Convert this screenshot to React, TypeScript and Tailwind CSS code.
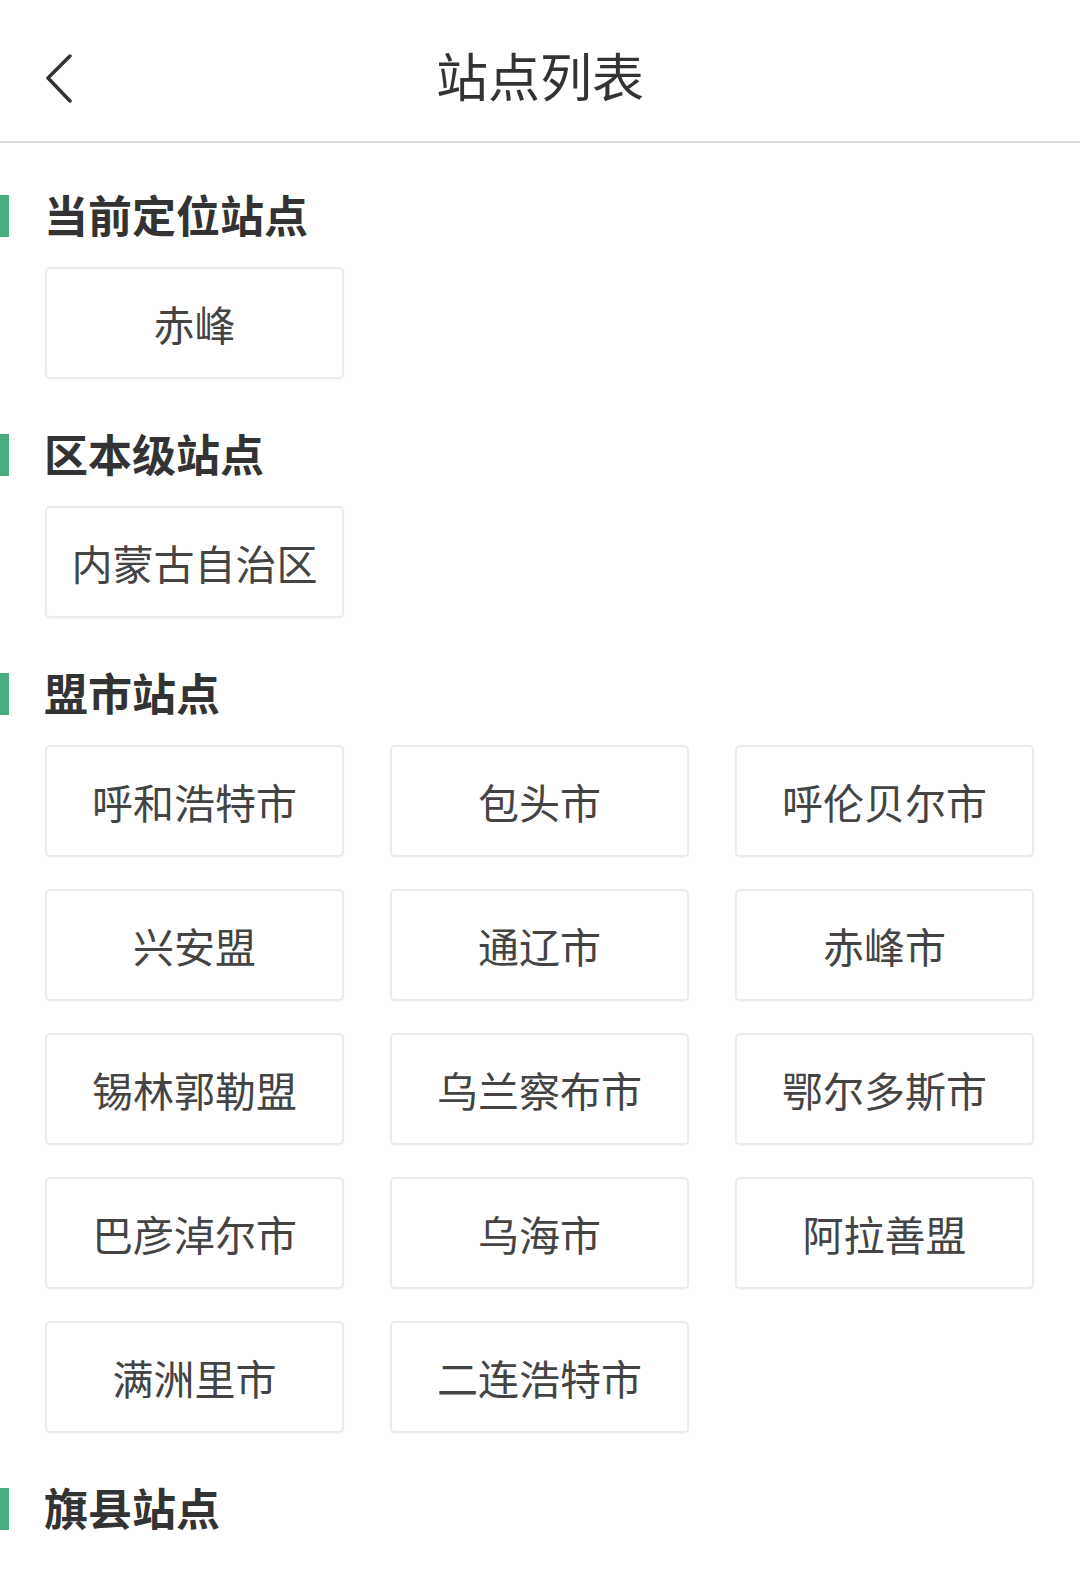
import React from 'react';

const font = { fontFamily: '"Noto Sans CJK SC", "Noto Sans", sans-serif' };

const sections: { title: string; items: string[] }[] = [
  { title: '当前定位站点', items: ['赤峰'] },
  { title: '区本级站点', items: ['内蒙古自治区'] },
  {
    title: '盟市站点',
    items: [
      '呼和浩特市', '包头市', '呼伦贝尔市',
      '兴安盟', '通辽市', '赤峰市',
      '锡林郭勒盟', '乌兰察布市', '鄂尔多斯市',
      '巴彦淖尔市', '乌海市', '阿拉善盟',
      '满洲里市', '二连浩特市',
    ],
  },
  { title: '旗县站点', items: [] },
];

function SectionTitle({ title }: { title: string }) {
  return (
    <div className="flex h-[60px] items-center">
      <div className="h-[42px] w-[9px] bg-[#48ad7e]" />
      <div className="mb-[4px] ml-[35px] text-[44px] font-bold leading-none text-[#333]">{title}</div>
    </div>
  );
}

function Chip({ label }: { label: string }) {
  return (
    <div className="flex h-[112px] items-center justify-center rounded-[5px] border-2 border-[#ececec] bg-white text-[41px] leading-none text-[#444] shadow-[0_1px_2px_rgba(0,0,0,0.04)]">
      {label}
    </div>
  );
}

export default function App() {
  return (
    <div className="min-h-[1571px] w-[1080px] overflow-hidden bg-white" style={font}>
      {/* Header */}
      <div className="relative flex h-[143px] items-center justify-center border-b-2 border-[#dedede]">
        <svg className="absolute left-[44px] top-[53px]" width="30" height="50" viewBox="0 0 30 50" fill="none">
          <polyline points="26,3 4,25 26,48" stroke="#333" strokeWidth="3.5" strokeLinecap="round" strokeLinejoin="round" />
        </svg>
        <div className="mt-[8px] text-[52px] leading-none text-[#333]">站点列表</div>
      </div>

      <div className="pt-[43px]">
        {sections.map((s) => (
          <div key={s.title} className="mb-[46px]">
            <SectionTitle title={s.title} />
            {s.items.length > 0 && (
              <div className="mt-[21px] grid grid-cols-[299px_299px_299px] gap-x-[46px] gap-y-[32px] pl-[45px]">
                {s.items.map((it) => (
                  <Chip key={it} label={it} />
                ))}
              </div>
            )}
          </div>
        ))}
      </div>
    </div>
  );
}
